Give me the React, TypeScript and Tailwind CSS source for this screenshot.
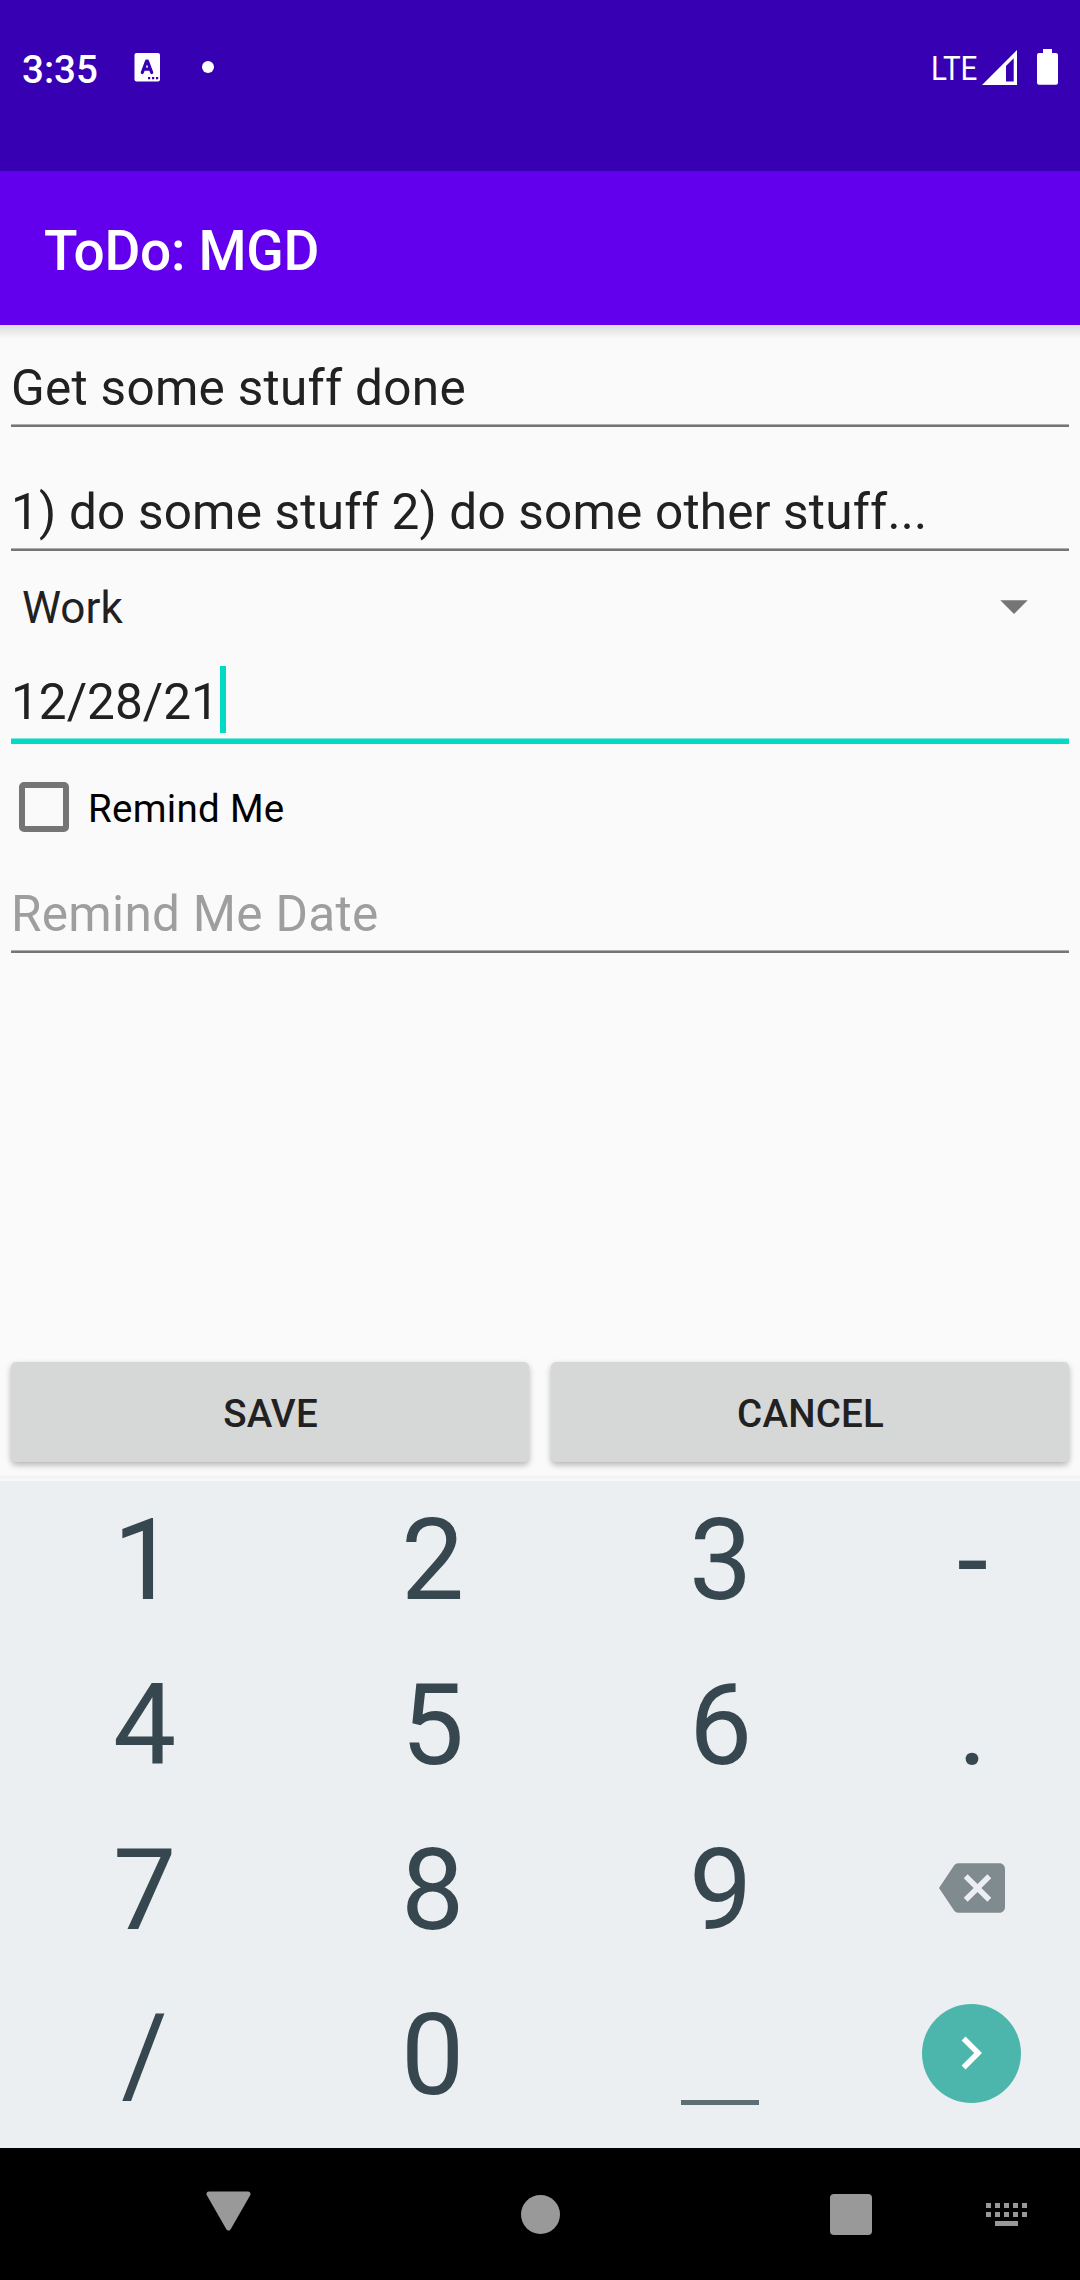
import React from "react";

const KEY = "flex h-[165px] items-center justify-center";

function StatusBar() {
  return (
    <div className="flex h-[171px] items-start bg-[#3700b3] text-white">
      <div className="flex h-[139px] w-full items-center pl-[22px] pr-[22px]">
        <span className="w-[112px] pt-[2px] text-[38.5px] font-medium leading-none">3:35</span>
        <svg className="-mt-[4px]" width="26" height="29" viewBox="0 0 26 29">
          <rect x="0.500" width="25.500" height="28.600" rx="2" fill="#fff" />
          <path d="M8.300 19.500 L12.500 8.200 H13.500 L17.700 19.500 M9.800 16.200 H16.200" fill="none" stroke="#3700b3" strokeWidth="3.200" strokeLinecap="round" strokeLinejoin="round" />
          <path d="M14 24h2.200v2.200h-2.200zM18 24h2.200v2.200h-2.200zM22 24h2.200v2.200h-2.200z" fill="#3700b3" />
        </svg>
        <div className="-mt-[5px] ml-[42px] h-3 w-3 rounded-full bg-white" />
        <div className="ml-auto flex items-center">
          <span className="mr-[5px] -mt-[3px] origin-right scale-x-[0.87] text-[34px] leading-none">LTE</span>
          <svg className="mr-[20px] -mt-[4px]" width="35" height="35" viewBox="0 0 35 35">
            <path fillRule="evenodd" d="M35 0V35H0ZM31.7 8.2L24 15.9V31.4H31.7Z" fill="#fff" />
          </svg>
          <svg className="-mt-[5px]" width="21" height="36" viewBox="0 0 21 36">
            <path d="M6 0h9v4h4a2 2 0 0 1 2 2v27.700a2 2 0 0 1-2 2H2a2 2 0 0 1-2-2V6a2 2 0 0 1 2-2h4z" fill="#fff" />
          </svg>
        </div>
      </div>
    </div>
  );
}

function Underline() {
  return <div className="mt-auto h-[3px] border-t border-[#adadad] bg-[#757575]" />;
}

function Form() {
  return (
    <div className="flex h-[1153px] flex-col bg-[#fafafa] text-[49.5px] text-[#212121]">
      <div className="-mb-[14px] h-[14px] bg-linear-to-b from-black/12 to-transparent" />
      <div className="mx-[11px] flex h-[102px] flex-col pt-[33px]">
        <div className="leading-[60px] tracking-[0.28px]">Get some stuff done</div>
        <Underline />
      </div>
      <div className="mx-[11px] flex h-[124px] flex-col pt-[55px]">
        <div className="leading-[60px] tracking-[0.19px]">1) do some stuff 2) do some other stuff...</div>
        <Underline />
      </div>
      <div className="flex h-[114px] items-center justify-between pl-[22px] pr-[52px] text-[44px]">
        <span>Work</span>
        <svg className="-mt-[2px]" width="28" height="14" viewBox="0 0 28 14">
          <path d="M0.300 0.300H27.700L14 14Z" fill="#757575" />
        </svg>
      </div>
      <div className="mx-[11px] flex h-[79px] flex-col pt-px">
        <div className="flex h-[67px] items-center">
          <span className="w-[209px] pt-[5px] leading-[60px]">12/28/21</span>
          <div className="h-[67px] w-[6px] bg-[#03dac5]" />
        </div>
        <div className="mt-auto h-[6px] border-t border-[#7be9de] bg-[#03dac5]" />
      </div>
      <div className="flex h-[127px] items-center pl-[19px] text-[38.5px] text-black">
        <div className="-mt-[2px] h-[50px] w-[50px] rounded-[5px] border-[6px] border-[#757575]" />
        <span className="pl-[19px] pt-[3px] leading-none tracking-[0.3px]">Remind Me</span>
      </div>
      <div className="mx-[11px] flex h-[82px] flex-col pt-[13px]">
        <div className="leading-[60px] tracking-[0.3px] text-[#9e9e9e]">Remind Me Date</div>
        <Underline />
      </div>
      <div className="mt-auto mb-4 flex gap-[22px] px-[11px] text-[38.5px] font-medium tracking-[0.2px]">
        <button className="h-[100px] flex-1 rounded-[5px] bg-[#d6d7d7] pt-[4px] pl-[1px] shadow-[0_3px_6px_rgba(0,0,0,0.28)]">SAVE</button>
        <button className="h-[100px] flex-1 rounded-[5px] bg-[#d6d7d7] pt-[4px] pl-[1px] shadow-[0_3px_6px_rgba(0,0,0,0.28)]">CANCEL</button>
      </div>
      <div className="-mt-[4px] h-[4px] bg-linear-to-b from-transparent to-black/4" />
    </div>
  );
}

function Digit({ children }: { children: React.ReactNode }) {
  return <div className="flex h-[165px] items-center justify-center pt-[4px] pl-[1px]">{children}</div>;
}

function Keyboard() {
  return (
    <div className="h-[670px] border-t-[3px] border-[#f5f7f8] bg-[#eceff1]">
      <div className="-mt-[4px] grid grid-cols-[288px_288px_288px_216px] text-[112.5px] leading-none text-[#37474f]">
        <Digit>1</Digit>
        <Digit>2</Digit>
        <Digit>3</Digit>
        <Digit>-</Digit>
        <Digit>4</Digit>
        <Digit>5</Digit>
        <Digit>6</Digit>
        <Digit>.</Digit>
        <Digit>7</Digit>
        <Digit>8</Digit>
        <Digit>9</Digit>
        <div className={KEY}>
          <svg width="66" height="66" viewBox="0 0 24 24" className="-mt-[4px]">
            <path d="M22 3H7c-.69 0-1.230.35-1.590.88L0 12l5.410 8.110c.36.53.9.89 1.590.89h15c1.100 0 2-.9 2-2V5c0-1.100-.9-2-2-2zm-3 12.590L17.590 17 14 13.410 10.410 17 9 15.590 12.590 12 9 8.410 10.410 7 14 10.590 17.590 7 19 8.410 15.410 12 19 15.590z" fill="#808b8f" />
          </svg>
        </div>
        <Digit>/</Digit>
        <Digit>0</Digit>
        <div className={KEY}>
          <div className="mt-[96px] h-[5px] w-[78px] bg-[#5f6e74]" />
        </div>
        <div className={KEY}>
          <div className="-mt-[3px] -ml-[2px] flex h-[99px] w-[99px] items-center justify-center rounded-full bg-[#4db6ac]">
            <svg width="66" height="66" viewBox="0 0 24 24">
              <path d="M10 6L8.590 7.410 13.170 12l-4.580 4.590L10 18l6-6z" fill="#fff" />
            </svg>
          </div>
        </div>
      </div>
    </div>
  );
}

function NavBar() {
  return (
    <div className="flex h-[132px] items-center bg-black pl-[206px]">
      <svg width="45" height="40" viewBox="0 0 45 40" className="-mt-[6px]">
        <path d="M3 3H42L22.500 37Z" fill="#999" stroke="#999" strokeWidth="5" strokeLinejoin="round" />
      </svg>
      <div className="ml-[270px] h-[39px] w-[39px] rounded-full bg-[#999]" />
      <div className="mt-[1px] ml-[270px] h-[41.500px] w-[41.500px] rounded-[4px] bg-[#999]" />
      <div className="ml-[114.500px] flex flex-col items-center gap-1">
        <div className="flex gap-1">
          {[0, 1, 2, 3, 4].map((i) => <i key={i} className="h-[5px] w-[5px] bg-[#999]" />)}
        </div>
        <div className="flex gap-1">
          {[0, 1, 2, 3, 4].map((i) => <i key={i} className="h-[5px] w-[5px] bg-[#999]" />)}
        </div>
        <div className="h-[5px] w-[23px] bg-[#999]" />
      </div>
    </div>
  );
}

export default function App() {
  return (
    <div className="h-[2280px] w-[1080px] overflow-hidden font-['Roboto',sans-serif]">
      <StatusBar />
      <div className="flex h-[154px] items-center bg-[#6200ee] pl-[44px] pt-[6px] text-[55px] font-medium tracking-[-0.3px] text-white">ToDo: MGD</div>
      <Form />
      <Keyboard />
      <NavBar />
    </div>
  );
}
